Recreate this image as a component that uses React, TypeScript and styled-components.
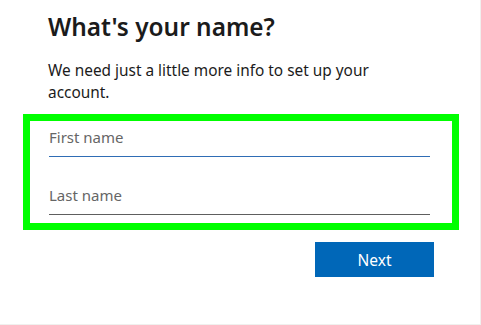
import React from "react";
import styled, { createGlobalStyle } from "styled-components";

const Global = createGlobalStyle`
  html, body { margin: 0; padding: 0; background: #ffffff; }
  body { font-family: "Noto Sans", "Open Sans", sans-serif; color: #1b1b1b; }
  * { box-sizing: border-box; }
`;

const Page = styled.div`
  width: 481px;
  height: 325px;
  padding: 11px 0 0 23px;
  border-right: 1px solid #f0f0ee;
  border-bottom: 1px solid #f0f0ee;
`;

const Heading = styled.h1`
  margin: 0 0 17px 25px;
  font-size: 24.4px;
  line-height: 32px;
  font-weight: 600;
  color: #1b1b1b;
`;

const Lead = styled.p`
  margin: 0 0 10px 25px;
  width: 340px;
  font-size: 15.4px;
  line-height: 22px;
  color: #1b1b1b;
`;

const Highlight = styled.div`
  width: 436px;
  border: 7px solid #00ff00;
  padding: 6px 22px 8px 19px;
  display: flex;
  flex-direction: column;
  gap: 28px;
`;

const Field = styled.input<{ $active?: boolean }>`
  display: block;
  width: 100%;
  border: none;
  border-bottom: 1px solid ${(p) => (p.$active ? "#2f6db5" : "#5e5e5e")};
  padding: 0 0 9px 0;
  height: 30px;
  font-family: inherit;
  font-size: 15px;
  line-height: 20px;
  color: #1b1b1b;
  background: transparent;
  outline: none;
  &::placeholder { color: #666666; opacity: 1; }
`;

const Actions = styled.div`
  display: flex;
  justify-content: flex-start;
  padding: 12px 0 0 292px;
`;

const Button = styled.button`
  width: 119px;
  height: 35px;
  border: none;
  background: #0067b8;
  color: #ffffff;
  font-family: inherit;
  font-size: 15.5px;
  padding: 0;
`;

export default function App() {
  return (
    <>
      <Global />
      <Page>
        <Heading>What's your name?</Heading>
        <Lead>We need just a little more info to set up your account.</Lead>
        <Highlight>
          <Field $active placeholder="First name" />
          <Field placeholder="Last name" />
        </Highlight>
        <Actions>
          <Button>Next</Button>
        </Actions>
      </Page>
    </>
  );
}
